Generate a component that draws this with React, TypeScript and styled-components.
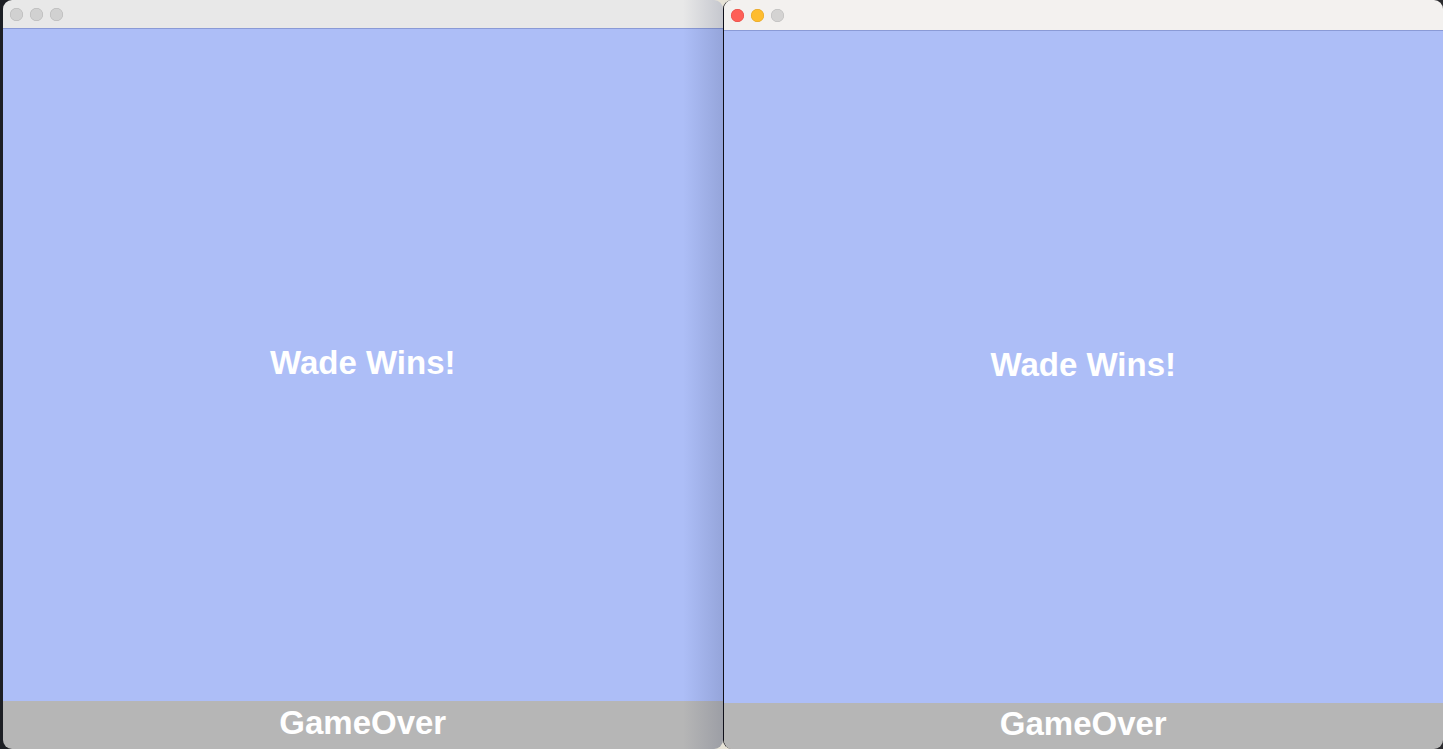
import React from "react";
import styled, { createGlobalStyle } from "styled-components";

const Global = createGlobalStyle`
  html, body { margin: 0; padding: 0; background: #262629; overflow: hidden; }
  #root { width: 1443px; height: 749px; }
`;

const Desktop = styled.div`
  width: 1443px;
  height: 749px;
  display: flex;
  padding-left: 3px;
  box-sizing: border-box;
  background: linear-gradient(90deg, #1d1f24 0 700px, #e6e2d6 700px 800px, #2b2b2e 800px);
`;

const Window = styled.div<{ $w: number; $active?: boolean }>`
  position: relative;
  width: ${(p) => p.$w}px;
  height: 749px;
  display: flex;
  flex-direction: column;
  border-radius: 9px;
  overflow: hidden;
  ${(p) => (p.$active ? "border-left: 1px solid #101018;" : "")}
`;

const TitleBar = styled.div<{ $h: number; $bg: string }>`
  height: ${(p) => p.$h}px;
  flex: 0 0 ${(p) => p.$h}px;
  background: ${(p) => p.$bg};
  border-bottom: 1px solid #8a9ad6;
  display: flex;
  align-items: center;
  gap: 7px;
  padding-left: 7px;
  box-sizing: border-box;
`;

const Light = styled.span<{ $c: string; $b: string }>`
  width: 13px;
  height: 13px;
  border-radius: 50%;
  background: ${(p) => p.$c};
  box-shadow: inset 0 0 0 0.5px ${(p) => p.$b};
`;

const Content = styled.div`
  flex: 1;
  background: #adbef7;
  display: flex;
  align-items: center;
  justify-content: center;
  padding-bottom: 5px;
  box-sizing: border-box;
`;

const Footer = styled.div<{ $h: number }>`
  flex: 0 0 ${(p) => p.$h}px;
  height: ${(p) => p.$h}px;
  background: #b6b6b6;
  display: flex;
  align-items: center;
  justify-content: center;
  padding-bottom: 6px;
  box-sizing: border-box;
`;

const BigText = styled.div`
  font-family: "Liberation Sans", Arial, sans-serif;
  font-weight: bold;
  font-size: 33px;
  color: #ffffff;
  line-height: 1;
`;

const Shade = styled.div`
  position: absolute;
  top: 0;
  right: 0;
  bottom: 0;
  width: 40px;
  pointer-events: none;
  background: linear-gradient(90deg, rgba(40, 50, 90, 0) 0%, rgba(40, 50, 90, 0.18) 100%);
`;

export default function App() {
  return (
    <>
      <Global />
      <Desktop>
        <Window $w={720}>
          <TitleBar $h={29} $bg="#e8e8e8">
            <Light $c="#d1d1d1" $b="#b3b3b3" />
            <Light $c="#d1d1d1" $b="#b3b3b3" />
            <Light $c="#d1d1d1" $b="#b3b3b3" />
          </TitleBar>
          <Content>
            <BigText>Wade Wins!</BigText>
          </Content>
          <Footer $h={48}>
            <BigText>GameOver</BigText>
          </Footer>
          <Shade />
        </Window>
        <Window $w={720} $active>
          <TitleBar $h={31} $bg="#f3f1ef">
            <Light $c="#fe5f57" $b="#e14640" />
            <Light $c="#febc2e" $b="#dfa123" />
            <Light $c="#d4d3d2" $b="#b8b8b8" />
          </TitleBar>
          <Content>
            <BigText>Wade Wins!</BigText>
          </Content>
          <Footer $h={46}>
            <BigText>GameOver</BigText>
          </Footer>
        </Window>
      </Desktop>
    </>
  );
}
